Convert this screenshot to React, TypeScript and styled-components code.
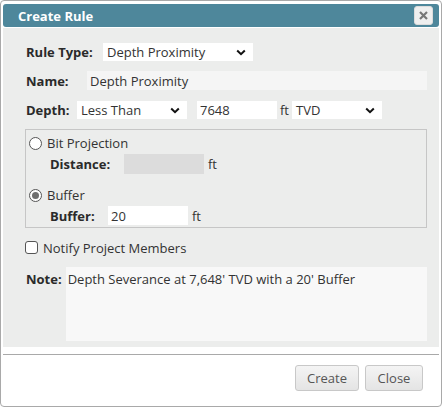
import React from 'react';
import styled, { createGlobalStyle } from 'styled-components';

const Global = createGlobalStyle`
  html, body {
    margin: 0;
    padding: 0;
    background: #fff;
  }
  body {
    font-family: 'Open Sans', 'DejaVu Sans', sans-serif;
    font-size: 13px;
    color: #333;
  }
`;

const Dialog = styled.div`
  box-sizing: border-box;
  width: 442px;
  height: 407px;
  border: 1px solid #a9a9a9;
  border-radius: 4px;
  padding: 3px 2px 2px;
  display: flex;
  flex-direction: column;
  background: #fff;
`;

const TitleBar = styled.div`
  flex: none;
  height: 23px;
  background: #4e879b;
  border-radius: 3px;
  display: flex;
  align-items: center;
  justify-content: space-between;
  padding: 0 6px 0 15px;
`;

const Title = styled.span`
  color: #fff;
  font-weight: bold;
  font-size: 13px;
`;

const CloseBox = styled.div`
  box-sizing: border-box;
  width: 19px;
  height: 19px;
  border-radius: 3px;
  background: #efefef;
  border: 1px solid #dcdcdc;
  display: flex;
  align-items: center;
  justify-content: center;
`;

const Body = styled.div`
  flex: none;
  background: #ecedec;
  padding: 15px 12px 6px 22px;
  display: flex;
  flex-direction: column;
  margin-top: 1px;
`;

const Row = styled.div<{ $gap?: number; $mt?: number }>`
  display: flex;
  align-items: center;
  gap: ${p => p.$gap ?? 0}px;
  margin-top: ${p => p.$mt ?? 0}px;
  padding-left: 1px;
`;

const CheckRow = styled.label`
  display: flex;
  align-items: center;
  gap: 5px;
  height: 17px;
  margin-top: 11px;
`;

const Label = styled.span<{ $w?: number }>`
  font-weight: bold;
  color: #2a2a2a;
  width: ${p => (p.$w ? `${p.$w}px` : 'auto')};
  flex: none;
`;

const SelectBox = styled.div<{ $w: number }>`
  box-sizing: border-box;
  width: ${p => p.$w}px;
  height: 18px;
  background: #fff;
  display: flex;
  align-items: center;
  justify-content: space-between;
  padding: 0 7px 0 4px;
  color: #333;
`;

const TextInput = styled.input<{ $w?: number; $bg?: string; $h?: number }>`
  box-sizing: border-box;
  width: ${p => (p.$w ? `${p.$w}px` : 'auto')};
  flex: ${p => (p.$w ? 'none' : '1')};
  height: ${p => p.$h ?? 19}px;
  border: none;
  outline: none;
  background: ${p => p.$bg ?? '#fff'};
  font: inherit;
  color: #333;
  padding: 0 3px;
`;

const Unit = styled.span<{ $ml?: number; $mr?: number }>`
  color: #333;
  margin-left: ${p => p.$ml ?? 0}px;
  margin-right: ${p => p.$mr ?? 0}px;
`;

const Group = styled.div`
  border: 1px solid #c6c6c6;
  margin-top: 10px;
  padding: 6px 3px 2px;
  display: flex;
  flex-direction: column;
`;

const OptionLine = styled.label<{ $mt?: number }>`
  display: flex;
  align-items: center;
  gap: 5px;
  height: 14px;
  margin-top: ${p => p.$mt ?? 0}px;
`;

const Radio = styled.span<{ $on?: boolean }>`
  box-sizing: border-box;
  width: 13px;
  height: 13px;
  border-radius: 50%;
  border: 1px solid #555;
  background: #fff;
  display: flex;
  align-items: center;
  justify-content: center;
  &::after {
    content: '';
    width: 7px;
    height: 7px;
    border-radius: 50%;
    background: ${p => (p.$on ? '#707070' : 'transparent')};
  }
`;

const SubRow = styled.div`
  display: flex;
  align-items: center;
  margin-top: 4px;
  padding-left: 21px;
`;

const Check = styled.span`
  box-sizing: border-box;
  width: 13px;
  height: 13px;
  border: 1px solid #555;
  border-radius: 3px;
  background: #fff;
`;

const NoteArea = styled.textarea`
  box-sizing: border-box;
  flex: 1;
  height: 74px;
  border: none;
  outline: none;
  resize: none;
  background: #f8f8f8;
  font: inherit;
  color: #333;
  padding: 3px 2px;
`;

const Footer = styled.div`
  flex: none;
  border-top: 1px solid #a9a9a9;
  margin-top: 7px;
  display: flex;
  justify-content: flex-end;
  align-items: flex-start;
  gap: 6px;
  padding: 10px 16px 0 0;
`;

const Button = styled.button<{ $w: number }>`
  box-sizing: border-box;
  width: ${p => p.$w}px;
  height: 26px;
  border: 1px solid #c8c8c8;
  border-radius: 3px;
  background: linear-gradient(#f4f4f4, #e4e4e4);
  font: inherit;
  color: #555;
  padding: 0;
`;

const Chevron = () => (
  <svg width="10" height="7" viewBox="0 0 10 7">
    <path d="M1.2 1.5 L5 5.2 L8.8 1.5" fill="none" stroke="#111" strokeWidth="2" />
  </svg>
);

const CloseIcon = () => (
  <svg width="9" height="9" viewBox="0 0 9 9">
    <path d="M1 1 L8 8 M8 1 L1 8" stroke="#777" strokeWidth="2.2" />
  </svg>
);

const App: React.FC = () => (
  <>
    <Global />
    <Dialog>
      <TitleBar>
        <Title>Create Rule</Title>
        <CloseBox>
          <CloseIcon />
        </CloseBox>
      </TitleBar>
      <Body>
        <Row>
          <Label $w={77}>Rule Type:</Label>
          <SelectBox $w={150}>
            Depth Proximity
            <Chevron />
          </SelectBox>
        </Row>
        <Row $mt={10}>
          <Label $w={61}>Name:</Label>
          <TextInput $bg="#f5f5f5" value="Depth Proximity" readOnly />
        </Row>
        <Row $mt={11}>
          <Label $w={51}>Depth:</Label>
          <SelectBox $w={110}>
            Less Than
            <Chevron />
          </SelectBox>
          <TextInput $w={80} $h={18} style={{ marginLeft: 10 }} value="7648" readOnly />
          <Unit $ml={3} $mr={3}>ft</Unit>
          <SelectBox $w={90}>
            TVD
            <Chevron />
          </SelectBox>
        </Row>
        <Group>
          <OptionLine>
            <Radio />
            Bit Projection
          </OptionLine>
          <SubRow>
            <Label $w={74}>Distance:</Label>
            <TextInput $w={80} $h={20} $bg="#dcdcdc" disabled />
            <Unit $ml={4}>ft</Unit>
          </SubRow>
          <OptionLine $mt={14}>
            <Radio $on />
            Buffer
          </OptionLine>
          <SubRow>
            <Label $w={58}>Buffer:</Label>
            <TextInput $w={80} value="20" readOnly />
            <Unit $ml={4}>ft</Unit>
          </SubRow>
        </Group>
        <CheckRow>
          <Check />
          Notify Project Members
        </CheckRow>
        <Row $mt={11} $gap={4} style={{ alignItems: 'flex-start' }}>
          <Label style={{ marginTop: 3 }}>Note:</Label>
          <NoteArea value="Depth Severance at 7,648' TVD with a 20' Buffer" readOnly />
        </Row>
      </Body>
      <Footer>
        <Button $w={64}>Create</Button>
        <Button $w={58}>Close</Button>
      </Footer>
    </Dialog>
  </>
);

export default App;
